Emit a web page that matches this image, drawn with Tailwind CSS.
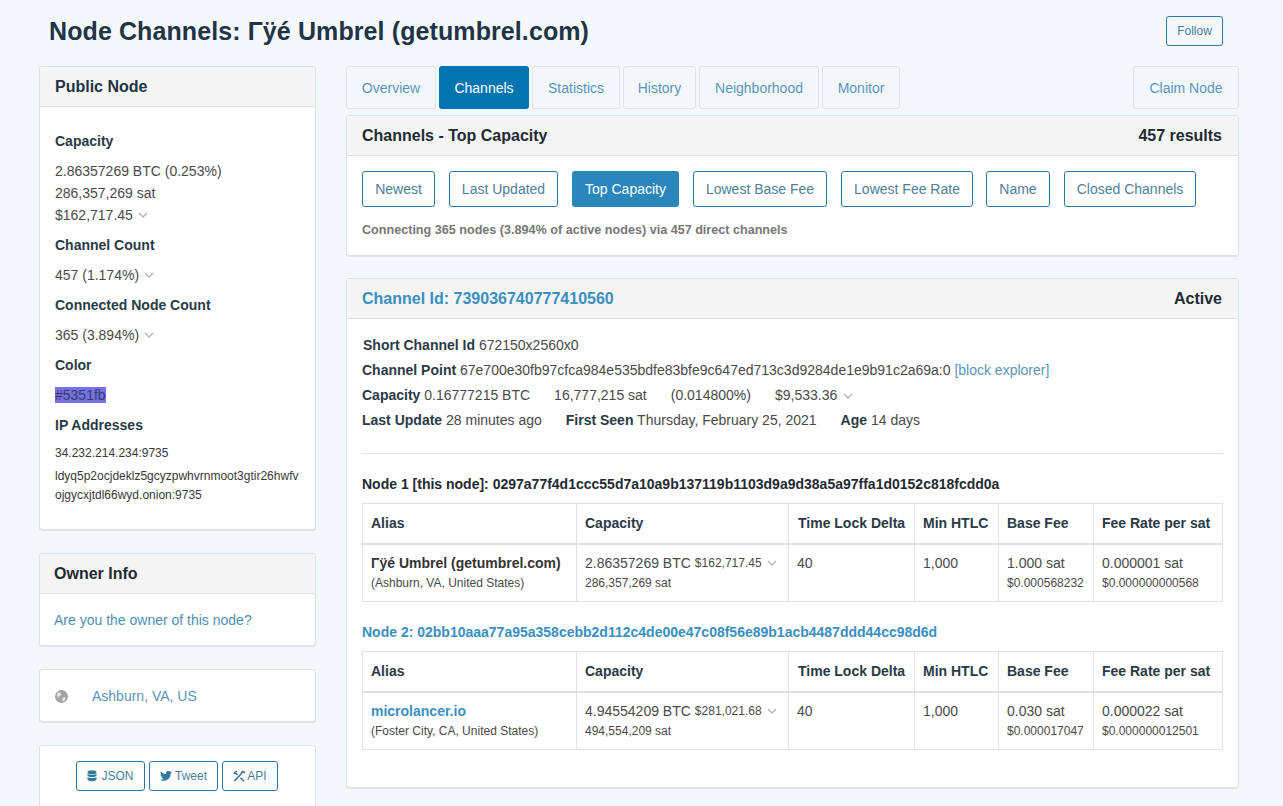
<!DOCTYPE html>
<html lang="en">
<head>
  <meta charset="UTF-8">
  <title>Node Channels</title>
  <script src="https://cdn.jsdelivr.net/npm/@tailwindcss/browser@4"></script>
</head>
<body class="bg-[#f4f8fb] font-['Liberation_Sans',Arial,sans-serif] text-[14px] text-[#4a4a4a] h-[806px] overflow-hidden">

  <div class="flex items-start justify-between pl-[49px] pr-[60px] h-[66px]">
    <h1 class="text-[25px] font-bold text-[#1f3444] leading-[30px] mt-[16px] tracking-[0.1px]">Node Channels: Γÿé Umbrel (getumbrel.com)</h1>
    <a class="mt-[16px] h-[30px] w-[57px] flex items-center justify-center border border-[#2f7a9c] rounded-[3px] text-[12px] text-[#4a7f9c]">Follow</a>
  </div>

  <div class="flex items-start pl-[39px] gap-[30px]">
    <!-- sidebar -->
    <div class="w-[277px] flex flex-col gap-[23px]">
      <div class="bg-white border border-[#dde3e9] rounded-[3px] shadow-[0_1px_1px_rgba(0,0,0,0.08)] h-[464px]">
        <div class="h-[40px] bg-[#f5f5f6] border-b border-[#dde3e9] px-[15px] flex items-center font-bold text-[16px] text-[#1f3444]">Public Node</div>
        <div class="px-[15px] pt-[24px]">
          <div class="font-bold text-[#2a3a47] leading-[20px]">Capacity</div>
          <div class="mt-[9px] leading-[22px]">2.86357269 BTC (0.253%)</div>
          <div class="leading-[22px]">286,357,269 sat</div>
          <div class="leading-[22px] flex items-center">$162,717.45
            <svg class="ml-[5px]" width="10" height="6" viewBox="0 0 10 6"><path d="M1 1l4 4 4-4" fill="none" stroke="#b5b5b5" stroke-width="1.4"/></svg>
          </div>
          <div class="font-bold text-[#2a3a47] leading-[20px] mt-[9px]">Channel Count</div>
          <div class="mt-[10px] leading-[20px] flex items-center">457 (1.174%)
            <svg class="ml-[5px]" width="10" height="6" viewBox="0 0 10 6"><path d="M1 1l4 4 4-4" fill="none" stroke="#b5b5b5" stroke-width="1.4"/></svg>
          </div>
          <div class="font-bold text-[#2a3a47] leading-[20px] mt-[10px]">Connected Node Count</div>
          <div class="mt-[10px] leading-[20px] flex items-center">365 (3.894%)
            <svg class="ml-[5px]" width="10" height="6" viewBox="0 0 10 6"><path d="M1 1l4 4 4-4" fill="none" stroke="#b5b5b5" stroke-width="1.4"/></svg>
          </div>
          <div class="font-bold text-[#2a3a47] leading-[20px] mt-[10px]">Color</div>
          <div class="mt-[10px] leading-[20px]"><span class="inline-block h-[16px] leading-[16px] bg-[#7472e6] text-[#3a3a6e]">#5351fb</span></div>
          <div class="font-bold text-[#2a3a47] leading-[20px] mt-[10px]">IP Addresses</div>
          <div class="mt-[8px] text-[12px] leading-[20px] text-[#3a3a3a]">34.232.214.234:9735</div>
          <div class="mt-[4px] text-[12px] leading-[19px] text-[#3a3a3a] break-all">ldyq5p2ocjdeklz5gcyzpwhvrnmoot3gtir26hwfvojgycxjtdl66wyd.onion:9735</div>
        </div>
      </div>

      <div class="bg-white border border-[#dde3e9] rounded-[3px] shadow-[0_1px_1px_rgba(0,0,0,0.08)] h-[93px]">
        <div class="h-[40px] bg-[#f5f5f6] border-b border-[#dde3e9] px-[14px] flex items-center font-bold text-[16px] text-[#1f2a33]">Owner Info</div>
        <div class="px-[14px] pt-[16px] leading-[20px] text-[#4f8fb5]">Are you the owner of this node?</div>
      </div>

      <div class="bg-white border border-[#dde3e9] rounded-[3px] shadow-[0_1px_1px_rgba(0,0,0,0.08)] h-[53px] px-[15px] pt-[1px] flex items-center">
        <svg width="13" height="13" viewBox="0 0 14 14"><circle cx="7" cy="7" r="7" fill="#a3a3a3"/><path d="M3 2.500l3 .5 1 2-2 1.500-1.500 2L2 6zM8 8l3-.5.500 2-2 3L8 11z" fill="#e6e6e6"/></svg>
        <span class="ml-[24px] text-[#5b96ba]">Ashburn, VA, US</span>
      </div>

      <div class="bg-white border border-[#dde3e9] rounded-[3px] h-[80px] pt-[15px] pr-[1px] flex justify-center gap-[4px]">
        <a class="h-[30px] w-[69px] border border-[#2f7a9c] rounded-[3px] flex items-center justify-center text-[12px] text-[#4a7f9c]">
          <svg class="mr-[4px]" width="10" height="12" viewBox="0 0 10 12" fill="#2f7a9c"><ellipse cx="5" cy="2.300" rx="4.500" ry="2"/><path d="M.5 3.800c1 1.500 8 1.500 9 0V5.800c-1 1.700-8 1.700-9 0zM.5 7c1 1.500 8 1.500 9 0v2.500c-1 2.200-8 2.200-9 0z"/></svg>JSON</a>
        <a class="h-[30px] w-[69px] border border-[#2f7a9c] rounded-[3px] flex items-center justify-center text-[12px] text-[#4a7f9c]">
          <svg class="mr-[3px]" width="12" height="10" viewBox="0 0 24 20" fill="#2f7a9c"><path d="M24 2.400c-.9.400-1.800.7-2.800.8 1-.6 1.800-1.600 2.200-2.700-1 .6-2 1-3.100 1.200A4.900 4.900 0 0 0 11.900 6.200C7.800 6 4.200 4 1.700.9c-1.300 2.200-.7 5.100 1.500 6.600-.8 0-1.600-.2-2.200-.6 0 2.300 1.600 4.400 3.900 4.900-.7.200-1.500.2-2.200.1.600 2 2.400 3.400 4.600 3.400A9.900 9.900 0 0 1 0 17.300 14 14 0 0 0 21.500 4.900c1-.7 1.800-1.500 2.500-2.500z"/></svg>Tweet</a>
        <a class="h-[30px] w-[56px] border border-[#2f7a9c] rounded-[3px] flex items-center justify-center text-[12px] text-[#4a7f9c]">
          <svg class="mr-[1px]" width="13" height="12" viewBox="0 0 13 12" fill="none" stroke="#3d6f88" stroke-width="1.500"><path d="M1.500 11 8 4M4.500 5 1.500 1.800M7.500 7.800l3.500 3.500M.8 3.800 3.800 1M8 4l1.500-2.500 2.500 1"/></svg>API</a>
      </div>
    </div>

    <!-- main -->
    <div class="w-[893px]">
      <div class="flex gap-[3px] h-[43px]">
        <a class="w-[90px] pt-[1px] flex items-center justify-center border border-[#dde3e9] rounded-[3px] text-[#5b96ba]">Overview</a>
        <a class="w-[90px] pt-[1px] flex items-center justify-center bg-[#0275b1] rounded-[3px] text-white">Channels</a>
        <a class="w-[88px] pt-[1px] flex items-center justify-center border border-[#dde3e9] rounded-[3px] text-[#5b96ba]">Statistics</a>
        <a class="w-[73px] pt-[1px] flex items-center justify-center border border-[#dde3e9] rounded-[3px] text-[#5b96ba]">History</a>
        <a class="w-[120px] pt-[1px] flex items-center justify-center border border-[#dde3e9] rounded-[3px] text-[#5b96ba]">Neighborhood</a>
        <a class="w-[78px] pt-[1px] flex items-center justify-center border border-[#dde3e9] rounded-[3px] text-[#5b96ba]">Monitor</a>
        <a class="w-[106px] pt-[1px] ml-auto flex items-center justify-center border border-[#dde3e9] rounded-[3px] text-[#5b96ba]">Claim Node</a>
      </div>

      <div class="mt-[6px] bg-white border border-[#dde3e9] rounded-[3px] shadow-[0_1px_1px_rgba(0,0,0,0.08)] h-[141px]">
        <div class="h-[40px] bg-[#f5f5f6] border-b border-[#dde3e9] pl-[15px] pr-[16px] flex items-center justify-between font-bold text-[16px] text-[#1f2a33]">
          <span>Channels - Top Capacity</span><span>457 results</span>
        </div>
        <div class="px-[15px] pt-[15px]">
          <div class="flex gap-[14px]">
            <a class="h-[36px] w-[73px] border border-[#2f7a9c] rounded-[3px] flex items-center justify-center text-[#4f8099]">Newest</a>
            <a class="h-[36px] w-[109px] border border-[#2f7a9c] rounded-[3px] flex items-center justify-center text-[#4f8099]">Last Updated</a>
            <a class="h-[36px] w-[107px] bg-[#2b87bb] rounded-[3px] flex items-center justify-center text-white">Top Capacity</a>
            <a class="h-[36px] w-[134px] border border-[#2f7a9c] rounded-[3px] flex items-center justify-center text-[#4f8099]">Lowest Base Fee</a>
            <a class="h-[36px] w-[132px] border border-[#2f7a9c] rounded-[3px] flex items-center justify-center text-[#4f8099]">Lowest Fee Rate</a>
            <a class="h-[36px] w-[64px] ml-[-1px] border border-[#2f7a9c] rounded-[3px] flex items-center justify-center text-[#4f8099]">Name</a>
            <a class="h-[36px] w-[132px] border border-[#2f7a9c] rounded-[3px] flex items-center justify-center text-[#4f8099]">Closed Channels</a>
          </div>
          <div class="mt-[14px] text-[12.6px] leading-[18px] font-bold text-[#777]">Connecting 365 nodes (3.894% of active nodes) via 457 direct channels</div>
        </div>
      </div>

      <div class="mt-[22px] bg-white border border-[#dde3e9] rounded-[3px] shadow-[0_1px_1px_rgba(0,0,0,0.08)] h-[510px]">
        <div class="h-[40px] bg-[#f5f5f6] border-b border-[#dde3e9] pl-[15px] pr-[16px] flex items-center justify-between font-bold text-[16px]">
          <span class="text-[#3b8fc0]">Channel Id: 739036740777410560</span><span class="text-[#1f2a33]">Active</span>
        </div>
        <div class="px-[15px] pt-[14px]">
          <div class="leading-[25px]">
            <div class="pl-[1px]"><b class="text-[#2a3a47]">Short Channel Id</b> 672150x2560x0</div>
            <div><b class="text-[#2a3a47]">Channel Point</b> 67e700e30fb97cfca984e535bdfe83bfe9c647ed713c3d9284de1e9b91c2a69a:0 <span class="text-[#5b96ba]">[block explorer]</span></div>
            <div class="flex items-center"><span><b class="text-[#2a3a47]">Capacity</b> 0.16777215 BTC</span><span class="ml-[24px]">16,777,215 sat</span><span class="ml-[24px]">(0.014800%)</span><span class="ml-[24px]">$9,533.36</span>
              <svg class="ml-[6px]" width="10" height="6" viewBox="0 0 10 6"><path d="M1 1l4 4 4-4" fill="none" stroke="#b5b5b5" stroke-width="1.4"/></svg>
            </div>
            <div class="flex"><span><b class="text-[#2a3a47]">Last Update</b> 28 minutes ago</span><span class="ml-[24px]"><b class="text-[#2a3a47]">First Seen</b> Thursday, February 25, 2021</span><span class="ml-[24px]"><b class="text-[#2a3a47]">Age</b> 14 days</span></div>
          </div>
          <div class="mt-[20px] border-t border-[#dde3e9]"></div>

          <div class="mt-[20px] font-bold text-[#1f2a33] leading-[20px]">Node 1 [this node]: 0297a77f4d1ccc55d7a10a9b137119b1103d9a9d38a5a97ffa1d0152c818fcdd0a</div>
          <table class="mt-[9px] w-[860px] table-fixed border-collapse">
            <colgroup><col class="w-[214px]"><col class="w-[212px]"><col class="w-[126px]"><col class="w-[84px]"><col class="w-[95px]"><col class="w-[129px]"></colgroup>
            <thead>
              <tr class="h-[40px] text-left text-[#2a3a47] whitespace-nowrap">
                <th class="border border-[#dfe3e6] border-b-2 px-[8px]">Alias</th><th class="border border-[#dfe3e6] border-b-2 px-[8px]">Capacity</th><th class="border border-[#dfe3e6] border-b-2 px-[9px]">Time Lock Delta</th><th class="border border-[#dfe3e6] border-b-2 px-[8px]">Min HTLC</th><th class="border border-[#dfe3e6] border-b-2 px-[8px]">Base Fee</th><th class="border border-[#dfe3e6] border-b-2 px-[8px]">Fee Rate per sat</th>
              </tr>
            </thead>
            <tbody>
              <tr class="h-[58px] align-top">
                <td class="border border-[#dfe3e6] px-[8px] pt-[8px]"><div class="font-bold text-[#333] leading-[20px]">Γÿé Umbrel (getumbrel.com)</div><div class="text-[12px] leading-[20px]">(Ashburn, VA, United States)</div></td>
                <td class="border border-[#dfe3e6] px-[8px] pt-[8px]"><div class="leading-[20px] flex items-center">2.86357269 BTC <span class="text-[12px] ml-[4px]">$162,717.45</span><svg class="ml-[5px]" width="10" height="6" viewBox="0 0 10 6"><path d="M1 1l4 4 4-4" fill="none" stroke="#b5b5b5" stroke-width="1.4"/></svg></div><div class="text-[12px] leading-[20px]">286,357,269 sat</div></td>
                <td class="border border-[#dfe3e6] px-[8px] pt-[8px] leading-[20px]">40</td>
                <td class="border border-[#dfe3e6] px-[8px] pt-[8px] leading-[20px]">1,000</td>
                <td class="border border-[#dfe3e6] px-[8px] pt-[8px]"><div class="leading-[20px]">1.000 sat</div><div class="text-[12px] leading-[20px]">$0.000568232</div></td>
                <td class="border border-[#dfe3e6] px-[8px] pt-[8px]"><div class="leading-[20px]">0.000001 sat</div><div class="text-[12px] leading-[20px]">$0.000000000568</div></td>
              </tr>
            </tbody>
          </table>

          <div class="mt-[20px] font-bold text-[#3b8fc0] leading-[20px]">Node 2: 02bb10aaa77a95a358cebb2d112c4de00e47c08f56e89b1acb4487ddd44cc98d6d</div>
          <table class="mt-[9px] w-[860px] table-fixed border-collapse">
            <colgroup><col class="w-[214px]"><col class="w-[212px]"><col class="w-[126px]"><col class="w-[84px]"><col class="w-[95px]"><col class="w-[129px]"></colgroup>
            <thead>
              <tr class="h-[40px] text-left text-[#2a3a47] whitespace-nowrap">
                <th class="border border-[#dfe3e6] border-b-2 px-[8px]">Alias</th><th class="border border-[#dfe3e6] border-b-2 px-[8px]">Capacity</th><th class="border border-[#dfe3e6] border-b-2 px-[9px]">Time Lock Delta</th><th class="border border-[#dfe3e6] border-b-2 px-[8px]">Min HTLC</th><th class="border border-[#dfe3e6] border-b-2 px-[8px]">Base Fee</th><th class="border border-[#dfe3e6] border-b-2 px-[8px]">Fee Rate per sat</th>
              </tr>
            </thead>
            <tbody>
              <tr class="h-[58px] align-top">
                <td class="border border-[#dfe3e6] px-[8px] pt-[8px]"><div class="font-bold text-[#3b8fc0] leading-[20px]">microlancer.io</div><div class="text-[12px] leading-[20px]">(Foster City, CA, United States)</div></td>
                <td class="border border-[#dfe3e6] px-[8px] pt-[8px]"><div class="leading-[20px] flex items-center">4.94554209 BTC <span class="text-[12px] ml-[4px]">$281,021.68</span><svg class="ml-[5px]" width="10" height="6" viewBox="0 0 10 6"><path d="M1 1l4 4 4-4" fill="none" stroke="#b5b5b5" stroke-width="1.4"/></svg></div><div class="text-[12px] leading-[20px]">494,554,209 sat</div></td>
                <td class="border border-[#dfe3e6] px-[8px] pt-[8px] leading-[20px]">40</td>
                <td class="border border-[#dfe3e6] px-[8px] pt-[8px] leading-[20px]">1,000</td>
                <td class="border border-[#dfe3e6] px-[8px] pt-[8px]"><div class="leading-[20px]">0.030 sat</div><div class="text-[12px] leading-[20px]">$0.000017047</div></td>
                <td class="border border-[#dfe3e6] px-[8px] pt-[8px]"><div class="leading-[20px]">0.000022 sat</div><div class="text-[12px] leading-[20px]">$0.000000012501</div></td>
              </tr>
            </tbody>
          </table>
        </div>
      </div>
    </div>
  </div>
</body>
</html>
